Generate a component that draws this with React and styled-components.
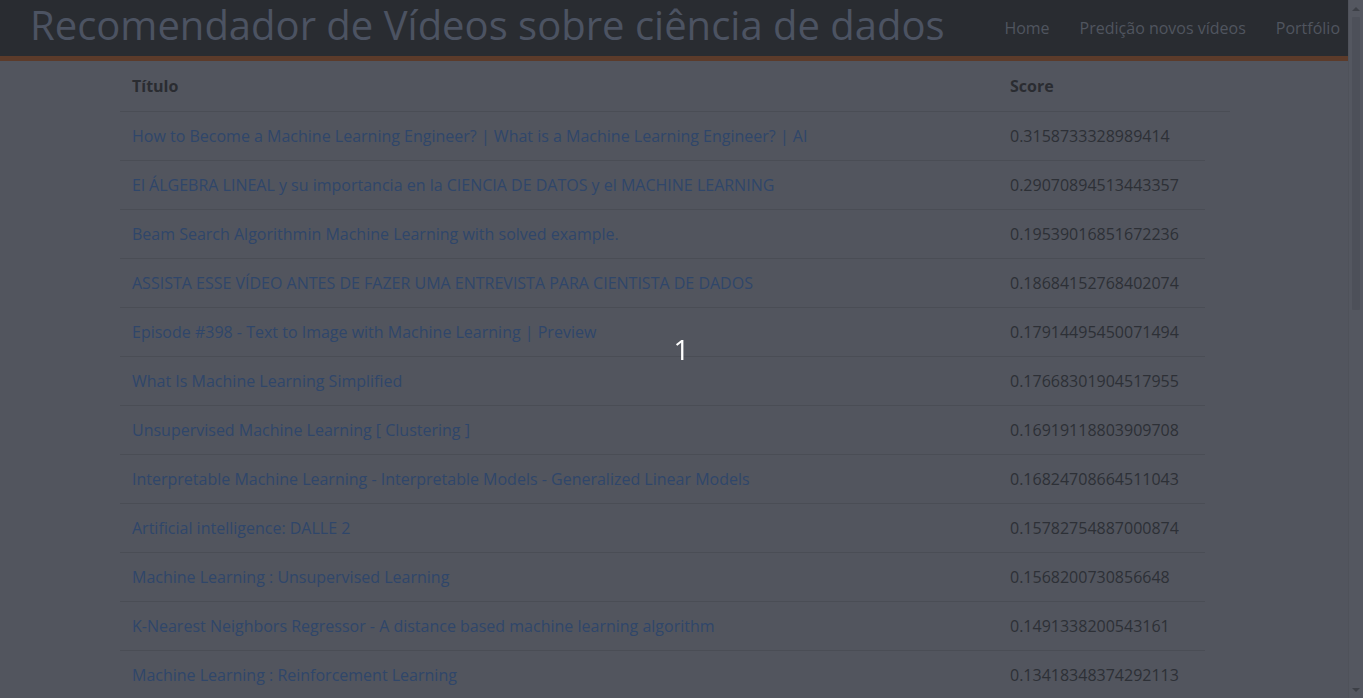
import styled, { createGlobalStyle } from 'styled-components';

const videos = [
  ['How to Become a Machine Learning Engineer? | What is a Machine Learning Engineer? | AI', '0.3158733328989414'],
  ['El ÁLGEBRA LINEAL y su importancia en la CIENCIA DE DATOS y el MACHINE LEARNING', '0.29070894513443357'],
  ['Beam Search Algorithmin Machine Learning with solved example.', '0.19539016851672236'],
  ['ASSISTA ESSE VÍDEO ANTES DE FAZER UMA ENTREVISTA PARA CIENTISTA DE DADOS', '0.18684152768402074'],
  ['Episode #398 - Text to Image with Machine Learning | Preview', '0.17914495450071494'],
  ['What Is Machine Learning Simplified', '0.17668301904517955'],
  ['Unsupervised Machine Learning [ Clustering ]', '0.16919118803909708'],
  ['Interpretable Machine Learning - Interpretable Models - Generalized Linear Models', '0.16824708664511043'],
  ['Artificial intelligence: DALLE 2', '0.15782754887000874'],
  ['Machine Learning : Unsupervised Learning', '0.1568200730856648'],
  ['K-Nearest Neighbors Regressor - A distance based machine learning algorithm', '0.1491338200543161'],
  ['Machine Learning : Reinforcement Learning', '0.13418348374292113'],
]

const GlobalStyle = createGlobalStyle`
  body {
    margin: 0 15px 0 0;
    background: #52555e;
    font-family: "Open Sans", "Liberation Sans", sans-serif;
    overflow: hidden;
  }
`

const Header = styled.header`
  height: 56px;
  background: #292c31;
  border-bottom: 5px solid #5c3b2a;
  display: flex;
  align-items: center;
  justify-content: space-between;
  padding: 0 8px 0 30px;
`

const Brand = styled.h1`
  margin: 0 0 6px;
  font-weight: 400;
  font-size: 40px;
  line-height: 40px;
  color: #4c5362;
  white-space: nowrap;
`

const Nav = styled.nav`
  display: flex;
  gap: 30px;
`

const NavLink = styled.a`
  font-size: 16px;
  color: #50555f;
  text-decoration: none;
`

const Container = styled.main`
  width: 1110px;
  margin: 0 auto;
  padding-left: 2px;
`

const Row = styled.div`
  display: grid;
  grid-template-columns: 878px 1fr;
  width: ${p => (p.$head ? '1110px' : '1085px')};
  border-bottom: 1px solid #4a4d55;
  font-size: 16px;
  line-height: 24px;
`

const Cell = styled.div`
  padding: ${p => (p.$head ? '13px 12px' : '12px')};
  white-space: nowrap;
  color: ${p => (p.$head ? '#2a2c31' : '#2d3036')};
  font-weight: ${p => (p.$head ? 700 : 400)};
`

const VideoLink = styled.a`
  color: #2f466a;
  text-decoration: none;
`

const Counter = styled.div`
  position: fixed;
  top: 50%;
  left: 50%;
  transform: translate(-50%, -50%);
  color: #fff;
  font-size: 28px;
  line-height: 1;
`

const Scrollbar = styled.div`
  position: fixed;
  top: 0;
  right: 0;
  width: 15px;
  height: 100vh;
  background: #545760;
  border-left: 1px solid #4f525a;
  box-sizing: border-box;
  display: flex;
  flex-direction: column;
  align-items: center;
`

const Arrow = styled.div`
  height: 17px;
  width: 100%;
  display: flex;
  align-items: center;
  justify-content: center;
  flex-shrink: 0;
  &::before {
    content: '';
    border-left: 4px solid transparent;
    border-right: 4px solid transparent;
    ${p => (p.$down ? 'border-top: 4px solid #3d4047;' : 'border-bottom: 4px solid #3d4047;')}
  }
`

const Thumb = styled.div`
  width: 8px;
  height: 293px;
  background: #4d5059;
  border-radius: 1px;
`

const Track = styled.div`
  flex: 1;
`

export default function App() {
  return (
    <>
      <GlobalStyle />
      <Header>
        <Brand>Recomendador de Vídeos sobre ciência de dados</Brand>
        <Nav>
          <NavLink href="#">Home</NavLink>
          <NavLink href="#">Predição novos vídeos</NavLink>
          <NavLink href="#">Portfólio</NavLink>
        </Nav>
      </Header>
      <Container>
        <Row $head>
          <Cell $head>Título</Cell>
          <Cell $head>Score</Cell>
        </Row>
        {videos.map(([title, score]) => (
          <Row key={title}>
            <Cell><VideoLink href="#">{title}</VideoLink></Cell>
            <Cell>{score}</Cell>
          </Row>
        ))}
      </Container>
      <Scrollbar>
        <Arrow />
        <Thumb />
        <Track />
        <Arrow $down />
      </Scrollbar>
      <Counter>1</Counter>
    </>
  )
}
